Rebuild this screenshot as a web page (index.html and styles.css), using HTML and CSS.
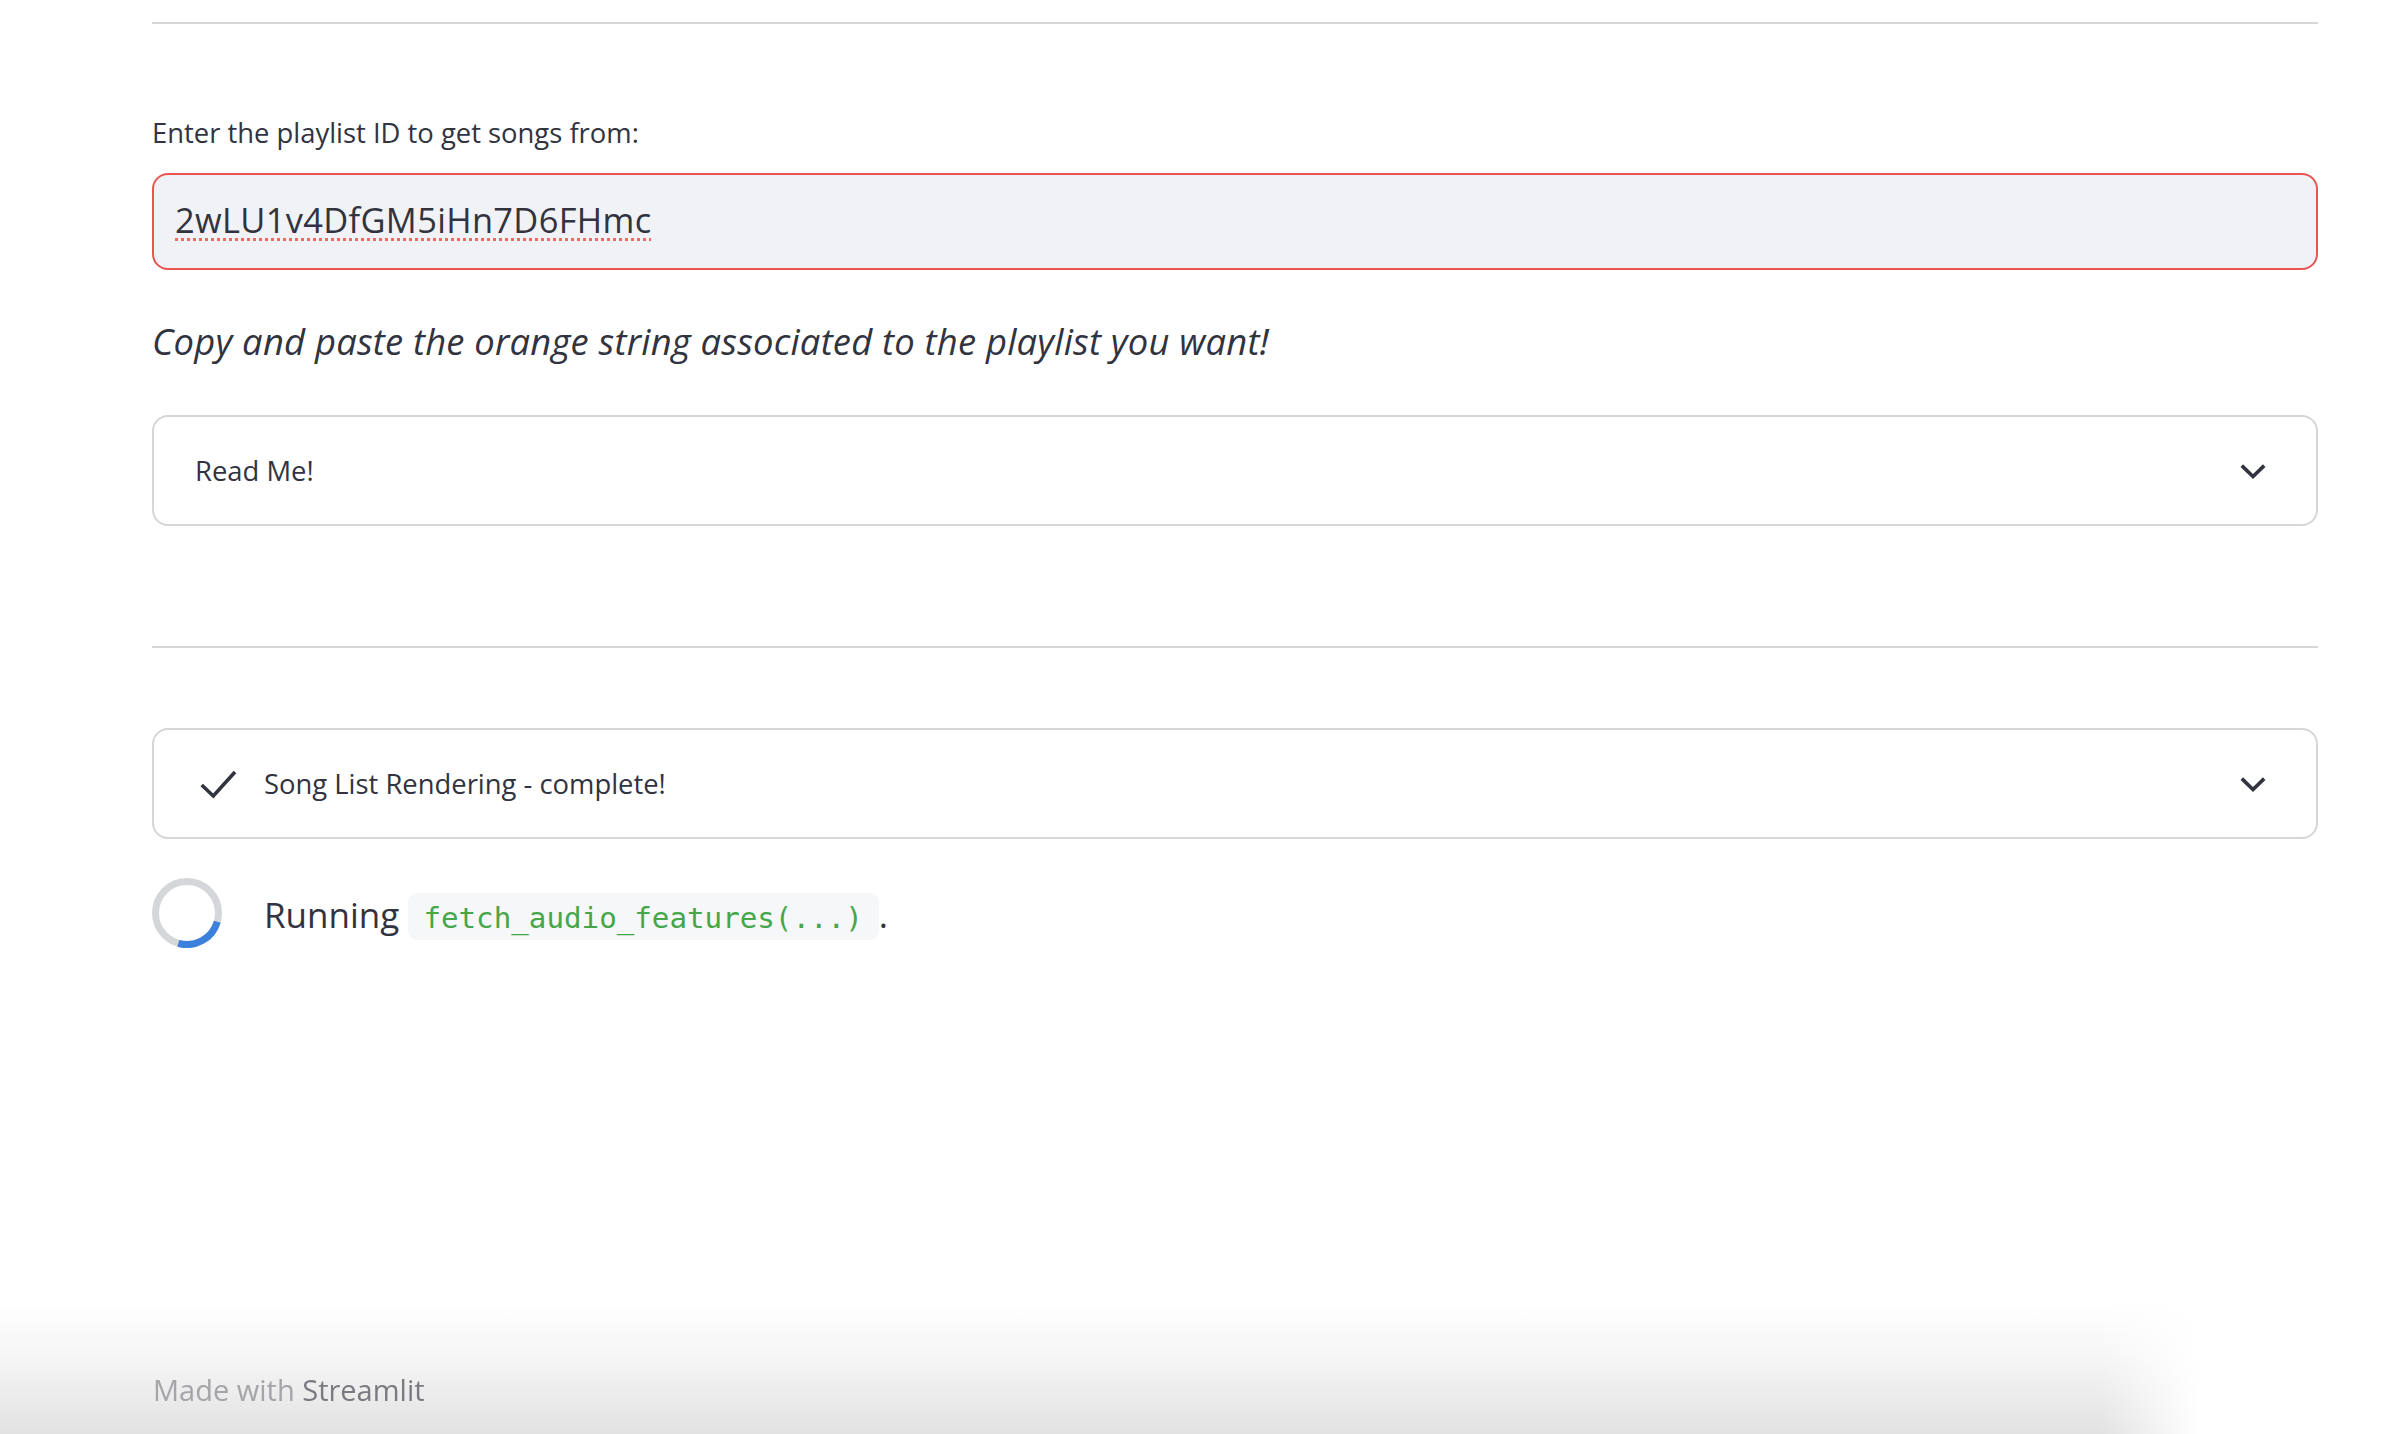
FILE: index.html
```html
<!DOCTYPE html>
<html lang="en">
<head>
<meta charset="utf-8">
<title>Playlist</title>
<link rel="stylesheet" href="styles.css">
</head>
<body>
<main class="main">
  <hr class="divider">
  <label class="field-label">Enter the playlist ID to get songs from:</label>
  <div class="text-input"><span class="value">2wLU1v4DfGM5iHn7D6FHmc</span></div>
  <p class="caption"><em>Copy and paste the orange string associated to the playlist you want!</em></p>
  <div class="expander expander-readme">
    <div class="expander-header">
      <span class="expander-title">Read Me!</span>
      <svg class="chevron" width="30" height="30" viewBox="0 0 30 30"><path d="M3.8 9.6 L15 20.6 L26.2 9.6" fill="none" stroke="#31333f" stroke-width="3.6" stroke-linejoin="miter"/></svg>
    </div>
  </div>
  <hr class="divider divider-mid">
  <div class="expander expander-status">
    <div class="expander-header">
      <span class="status-left">
        <svg class="check" width="40" height="40" viewBox="0 0 40 40"><path d="M3.7 21 L15.3 32 L37 8" fill="none" stroke="#31333f" stroke-width="3.6" stroke-linejoin="miter"/></svg>
        <span class="expander-title">Song List Rendering - complete!</span>
      </span>
      <svg class="chevron" width="30" height="30" viewBox="0 0 30 30"><path d="M3.8 9.6 L15 20.6 L26.2 9.6" fill="none" stroke="#31333f" stroke-width="3.6" stroke-linejoin="miter"/></svg>
    </div>
  </div>
  <div class="running">
    <svg class="spinner" width="70" height="70" viewBox="0 0 70 70">
      <circle cx="35" cy="35" r="31.5" fill="none" stroke="#d5d6d9" stroke-width="7"/>
      <path d="M65.28 43.68 A31.5 31.5 0 0 1 26.32 65.28" fill="none" stroke="#3b80dd" stroke-width="7"/>
    </svg>
    <p class="running-text">Running <code class="inline-code">fetch_audio_features(...)</code>.</p>
  </div>
</main>
<footer class="footer">
  <span class="made">Made with</span> <span class="brand">Streamlit</span>
</footer>
</body>
</html>
```
FILE: styles.css
```css
html, body {
  margin: 0;
  padding: 0;
  background: #ffffff;
}
body {
  display: flex;
  flex-direction: column;
  min-height: 100vh;
  font-family: "Open Sans", "Noto Sans", sans-serif;
  color: #31333f;
}
.main {
  margin-left: 152px;
  width: 2166px;
  padding-top: 22px;
}
.divider {
  display: block;
  height: 2px;
  margin: 0;
  border: 0;
  background: #d6d6d9;
}
.field-label {
  display: block;
  margin-top: 88px;
  font-size: 27.4px;
  line-height: 41px;
}
.text-input {
  margin-top: 20px;
  box-sizing: border-box;
  height: 97px;
  border: 2px solid #ea5552;
  border-radius: 16px;
  background: #f0f2f6;
  padding: 22px 21px 25px;
  font-size: 34.4px;
  line-height: 46px;
  letter-spacing: 0.35px;
  color: #31333f;
}
.value {
  text-decoration: underline dotted #ec6a62;
  text-decoration-thickness: 3px;
  text-underline-offset: 5px;
}
.caption {
  margin: 46px 0 0;
  font-size: 36.4px;
  line-height: 50px;
  letter-spacing: 0.2px;
}
.caption em {
  font-style: italic;
}
.expander {
  box-sizing: border-box;
  height: 111px;
  border: 2px solid #d6d6d9;
  border-radius: 16px;
}
.expander-readme {
  margin-top: 49px;
}
.divider-mid {
  margin-top: 120px;
}
.expander-status {
  margin-top: 80px;
}
.expander-header {
  height: 100%;
  display: flex;
  align-items: center;
  justify-content: space-between;
  padding: 0 48px 0 41px;
}
.expander-status .expander-header {
  padding-left: 44px;
}
.expander-title {
  font-size: 27.4px;
  line-height: 41px;
}
.status-left {
  display: flex;
  align-items: center;
  gap: 26px;
}
.check, .chevron {
  display: block;
  flex: none;
}
.running {
  margin-top: 39px;
  display: flex;
  align-items: flex-start;
  gap: 42px;
}
.spinner {
  display: block;
  flex: none;
}
.running-text {
  margin: 13px 0 0;
  font-size: 35px;
  line-height: 47px;
}
.inline-code {
  font-family: "DejaVu Sans Mono", "Liberation Mono", monospace;
  font-size: 29.2px;
  line-height: 1;
  color: #45a64a;
  background: #f6f7f9;
  border-radius: 9px;
  padding: 8px 16px 5px 15px;
}
.footer {
  margin-top: auto;
  height: 134px;
  box-sizing: border-box;
  padding: 70px 0 0 153px;
  font-size: 29px;
  line-height: 40px;
  background: linear-gradient(to bottom, rgba(226,226,226,0) 0%, rgba(226,226,226,0.3) 40%, #e2e2e2 100%);
  -webkit-mask-image: linear-gradient(to right, #000 0, #000 2100px, transparent 2200px);
  mask-image: linear-gradient(to right, #000 0, #000 2100px, transparent 2200px);
}
.made {
  color: #a4a4a9;
}
.brand {
  color: #7a7a81;
}
```
